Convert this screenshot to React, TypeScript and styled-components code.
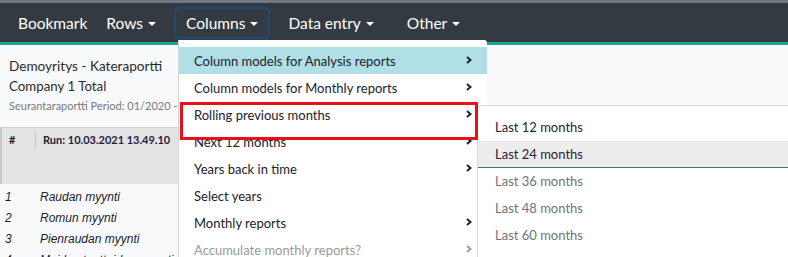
import React from "react";
import styled, { createGlobalStyle } from "styled-components";

const Global = createGlobalStyle`
  html, body { margin: 0; padding: 0; background: #f8f9fa; }
  body { font-family: Lato, "Noto Sans", sans-serif; overflow: hidden; }
  * { box-sizing: border-box; }
`;

const Root = styled.div`
  position: relative;
  width: 788px;
  height: 257px;
  overflow: hidden;
  background: #f8f9fa;
`;

const TopStrip = styled.div`
  height: 3px;
  background: #6c7a83;
`;

const Navbar = styled.nav`
  height: 42px;
  background: #343a41;
  border-bottom: 3px solid #17aa9b;
  display: flex;
  align-items: center;
  padding: 0 0 0 8px;
  gap: 8px;
`;

const NavItem = styled.div<{ $active?: boolean; $tight?: boolean; $wide?: boolean }>`
  display: flex;
  align-items: center;
  height: 32px;
  padding: 0 ${(p) => (p.$active ? 10 : 8)}px;
  margin-right: ${(p) => (p.$tight ? -9 : p.$wide ? 5 : 0)}px;
  border: 2px solid ${(p) => (p.$active ? "#1f4a72" : "transparent")};
  border-radius: 5px;
  color: #ffffff;
  font-size: 15.5px;
  white-space: nowrap;
`;

const Caret = styled.span`
  display: inline-block;
  margin-left: 5px;
  width: 0;
  height: 0;
  border-left: 4px solid transparent;
  border-right: 4px solid transparent;
  border-top: 4px solid #ffffff;
  transform: translateY(1px);
`;

const Content = styled.div`
  padding-top: 11px;
`;

const TitleBlock = styled.div`
  padding: 0 9px;
  height: 71px;
  display: flex;
  flex-direction: column;
`;

const Title = styled.div`
  font-size: 13.6px;
  color: #2b2b2b;
  line-height: 20px;
  white-space: nowrap;
`;

const Subtitle = styled.div`
  font-size: 13.3px;
  color: #2b2b2b;
  line-height: 20px;
`;

const Period = styled.div`
  font-size: 11px;
  color: #7a7a7a;
  line-height: 19px;
  white-space: nowrap;
`;

const HeaderRow = styled.div`
  height: 57px;
  background: #e3e3e3;
  border-top: 1px solid #d0d0d0;
  border-left: 2px solid #c8c8c8;
  display: flex;
  align-items: flex-start;
  padding-top: 3px;
  font-size: 11px;
  font-weight: 700;
  color: #1e1e3a;
`;

const HashCell = styled.div`
  width: 34px;
  padding-left: 7px;
  height: 18px;
  line-height: 18px;
  border-right: 1px solid #c4c4c4;
`;

const RunCell = styled.div`
  padding-left: 7px;
  line-height: 18px;
  white-space: nowrap;
`;

const Rows = styled.div`
  padding-top: 2px;
`;

const DataRow = styled.div`
  display: flex;
  height: 21px;
  align-items: center;
  font-family: "Liberation Sans", Arial, sans-serif;
  font-size: 12px;
  font-style: italic;
  color: #1c1c30;
  white-space: nowrap;
`;

const NumCell = styled.div`
  width: 40px;
  padding-left: 5px;
`;

const Menu = styled.div`
  position: absolute;
  left: 178px;
  top: 40px;
  width: 309px;
  height: 240px;
  background: #ffffff;
  border-left: 1px solid #d6d6d6;
  border-top-right-radius: 3px;
  padding-top: 7px;
`;

const MenuItem = styled.div<{ $hover?: boolean; $disabled?: boolean }>`
  height: 27px;
  display: flex;
  align-items: center;
  justify-content: space-between;
  padding: 0 15px 0 15px;
  font-size: 13px;
  color: ${(p) => (p.$disabled ? "#9a9a9a" : "#22202e")};
  background: ${(p) => (p.$hover ? "#b0dfe5" : "transparent")};
  white-space: nowrap;
`;

const SubMenu = styled.div`
  position: absolute;
  left: 477px;
  top: 105px;
  width: 330px;
  height: 170px;
  background: #ffffff;
  border: 1px solid #d9d9d9;
  border-radius: 3px;
  padding-top: 8px;
`;

const SubItem = styled.div<{ $hover?: boolean; $muted?: boolean }>`
  height: 27px;
  display: flex;
  align-items: center;
  padding-left: 17px;
  font-size: 13px;
  color: ${(p) => (p.$muted ? "#6f7378" : "#2a2236")};
  background: ${(p) => (p.$hover ? "#ededed" : "transparent")};
  border-bottom: 1px solid ${(p) => (p.$hover ? "#46717a" : "transparent")};
`;

const Highlight = styled.div`
  position: absolute;
  left: 180px;
  top: 102px;
  width: 298px;
  height: 38px;
  border: 3px solid #e8101a;
  pointer-events: none;
`;

const Chevron = ({ muted }: { muted?: boolean }) => (
  <svg width="6" height="8" viewBox="0 0 6 8" style={{ marginTop: -2 }}>
    <polyline
      points="1,1 4.5,4 1,7"
      fill="none"
      stroke={muted ? "#a0a0a0" : "#1a2140"}
      strokeWidth="2"
    />
  </svg>
);

const menuItems: { label: string; arrow: boolean; hover?: boolean; disabled?: boolean }[] = [
  { label: "Column models for Analysis reports", arrow: true, hover: true },
  { label: "Column models for Monthly reports", arrow: true },
  { label: "Rolling previous months", arrow: true },
  { label: "Next 12 months", arrow: true },
  { label: "Years back in time", arrow: true },
  { label: "Select years", arrow: false },
  { label: "Monthly reports", arrow: true },
  { label: "Accumulate monthly reports?", arrow: true, disabled: true },
];

const subItems = [
  { label: "Last 12 months" },
  { label: "Last 24 months", hover: true },
  { label: "Last 36 months", muted: true },
  { label: "Last 48 months", muted: true },
  { label: "Last 60 months", muted: true },
];

const rows = [
  ["1", "Raudan myynti"],
  ["2", "Romun myynti"],
  ["3", "Pienraudan myynti"],
  ["4", "Muiden tuotteiden myynti"],
];

export default function App() {
  return (
    <Root>
      <Global />
      <TopStrip />
      <Navbar>
        <NavItem $tight>Bookmark</NavItem>
        <NavItem>
          Rows<Caret />
        </NavItem>
        <NavItem $active>
          Columns<Caret />
        </NavItem>
        <NavItem $wide>
          Data entry<Caret />
        </NavItem>
        <NavItem>
          Other<Caret />
        </NavItem>
      </Navbar>
      <Content>
        <TitleBlock>
          <Title>Demoyritys - Kateraportti</Title>
          <Subtitle>Company 1 Total</Subtitle>
          <Period>Seurantaraportti Period: 01/2020 - 12/2020</Period>
        </TitleBlock>
        <HeaderRow>
          <HashCell>#</HashCell>
          <RunCell>Run: 10.03.2021 13.49.10</RunCell>
        </HeaderRow>
        <Rows>
          {rows.map(([n, name]) => (
            <DataRow key={n}>
              <NumCell>{n}</NumCell>
              <div>{name}</div>
            </DataRow>
          ))}
        </Rows>
      </Content>
      <Menu>
        {menuItems.map((m) => (
          <MenuItem key={m.label} $hover={m.hover} $disabled={m.disabled}>
            <span>{m.label}</span>
            {m.arrow && <Chevron muted={m.disabled} />}
          </MenuItem>
        ))}
      </Menu>
      <SubMenu>
        {subItems.map((s) => (
          <SubItem key={s.label} $hover={s.hover} $muted={s.muted}>
            {s.label}
          </SubItem>
        ))}
      </SubMenu>
      <Highlight />
    </Root>
  );
}
